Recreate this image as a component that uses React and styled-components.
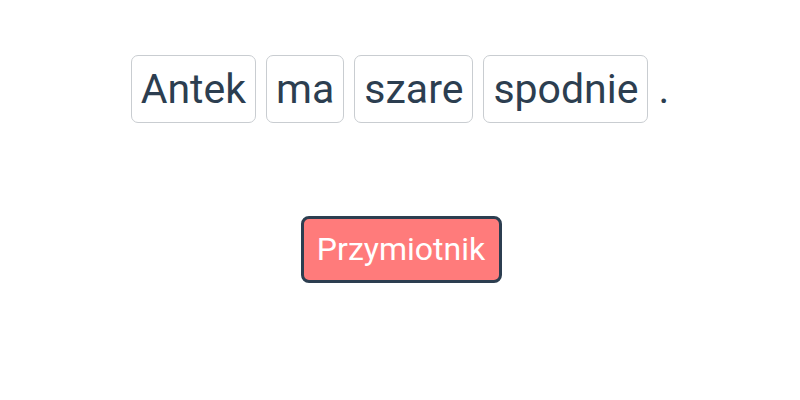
import React from "react";
import styled, { createGlobalStyle } from "styled-components";

const GlobalStyle = createGlobalStyle`
  body {
    margin: 0;
    background: #ffffff;
    font-family: Roboto, "Liberation Sans", sans-serif;
    color: #2c3e50;
  }
`;

const Page = styled.div`
  display: flex;
  flex-direction: column;
  align-items: center;
  padding-top: 55px;
`;

const Sentence = styled.div`
  display: flex;
  align-items: center;
  gap: 10px;
`;

const Word = styled.span`
  font-size: 41px;
  line-height: 48px;
  padding: 9px 9px;
  border: 1px solid #c9cdd1;
  border-radius: 7px;
  color: #2c3e50;
`;

const Punct = styled.span`
  font-size: 41px;
  line-height: 48px;
  padding: 10px 0;
`;

const TagButton = styled.button`
  margin-top: 93px;
  margin-left: 3px;
  font-family: Roboto, "Liberation Sans", sans-serif;
  font-size: 32px;
  line-height: 38px;
  padding: 11px 14px 12px 13px;
  color: #ffffff;
  background: #ff7b7b;
  border: 3px solid #2c3e50;
  border-radius: 8px;
`;

export default function App() {
  const words = ["Antek", "ma", "szare", "spodnie"];
  return (
    <>
      <GlobalStyle />
      <Page>
        <Sentence>
          {words.map((w) => (
            <Word key={w}>{w}</Word>
          ))}
          <Punct>.</Punct>
        </Sentence>
        <TagButton>Przymiotnik</TagButton>
      </Page>
    </>
  );
}
